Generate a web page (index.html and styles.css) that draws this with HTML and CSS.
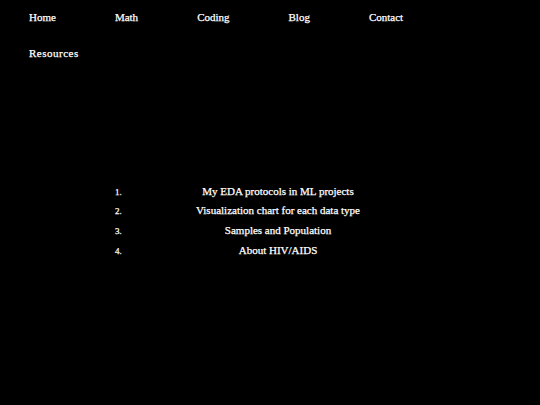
FILE: index.html
```html
<!DOCTYPE html>
<html lang="en">
<head>
<meta charset="utf-8">
<title>Home</title>
<link rel="stylesheet" href="styles.css">
</head>
<body>
<header class="site-header">
  <nav class="nav">
    <a class="nav-link" href="#">Home</a>
    <a class="nav-link" href="#">Math</a>
    <a class="nav-link" href="#">Coding</a>
    <a class="nav-link" href="#">Blog</a>
    <a class="nav-link" href="#">Contact</a>
    <a class="nav-link" href="#">Resources</a>
  </nav>
</header>
<main class="content">
  <ol class="posts">
    <li class="post"><a href="#">My EDA protocols in ML projects</a></li>
    <li class="post"><a href="#">Visualization chart for each data type</a></li>
    <li class="post"><a href="#">Samples and Population</a></li>
    <li class="post"><a href="#">About HIV/AIDS</a></li>
  </ol>
</main>
</body>
</html>
```
FILE: styles.css
```css
html, body {
  margin: 0;
  padding: 0;
  background: #000;
  color: #fff;
  font-family: "Liberation Serif", "DejaVu Serif", serif;
  font-size: 11px;
  -webkit-text-stroke: 0.25px #fff;
}
a {
  color: #fff;
  text-decoration: none;
}
.site-header {
  padding: 10px 29px 0 29px;
}
.nav {
  display: flex;
  flex-wrap: wrap;
  column-gap: 59px;
  row-gap: 22px;
  line-height: 14px;
  max-width: 440px;
}
.nav-link {
  display: block;
}
.nav-link:last-child {
  letter-spacing: 0.5px;
}
.content {
  padding-top: 123.5px;
}
.posts {
  margin: 0 0 0 84px;
  padding-left: 40px;
  width: 308px;
  list-style: decimal outside;
}
.post {
  text-align: center;
  line-height: 14px;
  margin-bottom: 5.8px;
}
.post::marker {
  font-size: 9px;
}
```
